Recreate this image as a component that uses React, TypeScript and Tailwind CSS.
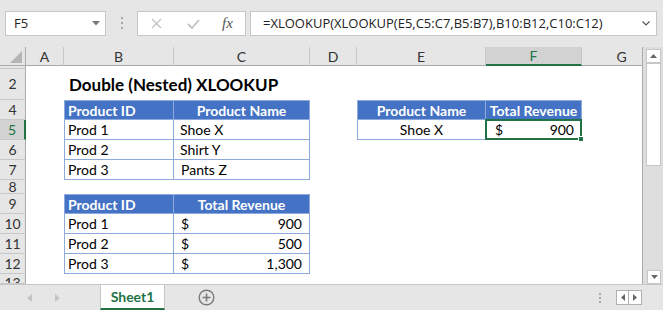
import React from "react";

const B = "border-[#8ea9db]";

function Row({
  n,
  h,
  sel,
  top,
  children,
}: {
  n: string;
  h: string;
  sel?: boolean;
  top?: boolean;
  children?: React.ReactNode;
}) {
  return (
    <div className={`flex shrink-0 ${h}`}>
      <div
        className={`w-[26px] shrink-0 flex justify-center overflow-hidden border-b border-b-[#c8c8c8] text-[14px] leading-none ${
          top ? "items-start pt-[2px]" : "items-center"
        } ${
          sel
            ? "bg-[#d2d2d2] text-[#217346] border-r-2 border-r-[#217346]"
            : "bg-[#e6e6e6] text-[#333] border-r border-r-[#ababab]"
        }`}
      >
        {n}
      </div>
      {children}
    </div>
  );
}

function ColHead({ label, w, sel }: { label: string; w: string; sel?: boolean }) {
  return (
    <div
      className={`${w} shrink-0 flex items-center justify-center border-r border-[#c8c8c8] text-[14px] ${
        sel ? "bg-[#d2d2d2] text-[#217346] border-b-2 border-b-[#217346]" : "text-[#333] border-b border-b-[#ababab]"
      }`}
    >
      {label}
    </div>
  );
}

function FormulaBar() {
  return (
    <div className="h-[47px] shrink-0 flex items-start pt-[11px] font-['Open_Sans',sans-serif] text-[13px] text-[#222]">
      <div className="ml-[5px] w-[101px] h-[25px] bg-white border border-[#c6c6c6] flex items-center pl-[8px] pr-[5px]">
        <span>F5</span>
        <svg className="ml-auto" width="8" height="5" viewBox="0 0 8 5">
          <path d="M0 0 L8 0 L4 4.5 Z" fill="#7a7a7a" />
        </svg>
      </div>
      <div className="ml-[15px] mt-[6px] flex flex-col gap-[3px]">
        <div className="w-[2px] h-[2px] bg-[#a8a8a8]" />
        <div className="w-[2px] h-[2px] bg-[#a8a8a8]" />
        <div className="w-[2px] h-[2px] bg-[#a8a8a8]" />
      </div>
      <div className="ml-[14px] w-[109px] h-[25px] bg-white border border-[#c6c6c6] flex items-center">
        <svg className="ml-[13px]" width="11" height="11" viewBox="0 0 11 11">
          <path d="M1 1 L10 10 M10 1 L1 10" stroke="#c2c2c2" strokeWidth="1.3" />
        </svg>
        <svg className="ml-[25px]" width="13" height="10" viewBox="0 0 13 10">
          <path d="M1 5 L5 9 L12 1" stroke="#c2c2c2" strokeWidth="1.8" fill="none" />
        </svg>
        <span className="ml-[22px] font-['Liberation_Serif',serif] italic text-[15px] text-[#555]">fx</span>
      </div>
      <div className="ml-[4px] w-[407px] h-[25px] bg-white border border-[#c6c6c6] flex items-center pl-[12px] pr-[6px]">
        <span>=XLOOKUP(XLOOKUP(E5,C5:C7,B5:B7),B10:B12,C10:C12)</span>
        <svg className="ml-auto" width="8" height="5" viewBox="0 0 8 5">
          <path d="M0.5 0.5 L4 4 L7.5 0.5" stroke="#555" strokeWidth="1.2" fill="none" />
        </svg>
      </div>
    </div>
  );
}

function Sheet() {
  return (
    <div className="w-[643px] shrink-0 flex flex-col border-r border-[#ababab] bg-white overflow-hidden">
      <div className="flex h-[19px] shrink-0 bg-[#e6e6e6]">
        <div className="w-[26px] shrink-0 flex items-end justify-end pr-[3px] pb-[2px] border-r border-b border-[#ababab]">
          <svg width="12" height="12" viewBox="0 0 12 12">
            <path d="M12 0 L12 12 L0 12 Z" fill="#b5b5b5" />
          </svg>
        </div>
        <ColHead label="A" w="w-[38px]" />
        <ColHead label="B" w="w-[110px]" />
        <ColHead label="C" w="w-[136px]" />
        <ColHead label="D" w="w-[47px]" />
        <ColHead label="E" w="w-[129px]" />
        <ColHead label="F" w="w-[96px]" sel />
        <ColHead label="G" w="w-[80px]" />
      </div>

      <Row n="" h="h-[3px]" />
      <Row n="2" h="h-[31px]">
        <div className="w-[38px] shrink-0" />
        <div className="flex items-center pl-[5px] text-[17px] font-bold whitespace-nowrap">
          Double (Nested) XLOOKUP
        </div>
      </Row>

      <Row n="4" h="h-[20px]">
        <div className="w-[38px] shrink-0" />
        <div className={`w-[110px] shrink-0 flex items-center pl-[3px] bg-[#4472c4] text-white font-bold border ${B}`}>
          Product ID
        </div>
        <div className={`w-[136px] shrink-0 flex items-center justify-center bg-[#4472c4] text-white font-bold border-t border-r border-b ${B}`}>
          Product Name
        </div>
        <div className="w-[47px] shrink-0" />
        <div className={`w-[129px] shrink-0 flex items-center justify-center bg-[#4472c4] text-white font-bold border ${B}`}>
          Product Name
        </div>
        <div className={`w-[96px] shrink-0 flex items-center justify-center bg-[#4472c4] text-white font-bold border-t border-r border-b ${B} whitespace-nowrap`}>
          Total Revenue
        </div>
      </Row>
      <Row n="5" h="h-[20px]" sel>
        <div className="w-[38px] shrink-0" />
        <div className={`w-[110px] shrink-0 flex items-center pl-[3px] border-l border-r border-b ${B}`}>Prod 1</div>
        <div className={`w-[136px] shrink-0 flex items-center pl-[6px] border-r border-b ${B}`}>Shoe X</div>
        <div className="w-[47px] shrink-0" />
        <div className={`w-[129px] shrink-0 flex items-center justify-center border-l border-r border-b ${B}`}>Shoe X</div>
        <div className={`relative w-[96px] shrink-0 flex items-center justify-between pl-[9px] pr-[7px] border-r border-b ${B}`}>
          <span>$</span>
          <span>900</span>
          <div className="absolute -left-[1px] -top-[1px] -right-[1px] -bottom-[1px] border-2 border-[#217346]" />
          <div className="absolute -right-[3px] -bottom-[3px] w-[6px] h-[6px] bg-[#217346] border border-white" />
        </div>
      </Row>
      <Row n="6" h="h-[20px]">
        <div className="w-[38px] shrink-0" />
        <div className={`w-[110px] shrink-0 flex items-center pl-[3px] border-l border-r border-b ${B}`}>Prod 2</div>
        <div className={`w-[136px] shrink-0 flex items-center pl-[6px] border-r border-b ${B}`}>Shirt Y</div>
      </Row>
      <Row n="7" h="h-[20px]">
        <div className="w-[38px] shrink-0" />
        <div className={`w-[110px] shrink-0 flex items-center pl-[3px] border-l border-r border-b ${B}`}>Prod 3</div>
        <div className={`w-[136px] shrink-0 flex items-center pl-[7px] border-r border-b ${B}`}>Pants Z</div>
      </Row>
      <Row n="8" h="h-[14px]" />

      <Row n="9" h="h-[20px]">
        <div className="w-[38px] shrink-0" />
        <div className={`w-[110px] shrink-0 flex items-center pl-[3px] bg-[#4472c4] text-white font-bold border ${B}`}>
          Product ID
        </div>
        <div className={`w-[136px] shrink-0 flex items-center justify-center bg-[#4472c4] text-white font-bold border-t border-r border-b ${B}`}>
          Total Revenue
        </div>
      </Row>
      {[
        ["10", "Prod 1", "900"],
        ["11", "Prod 2", "500"],
        ["12", "Prod 3", "1,300"],
      ].map(([n, id, rev]) => (
        <Row key={n} n={n} h="h-[20px]">
          <div className="w-[38px] shrink-0" />
          <div className={`w-[110px] shrink-0 flex items-center pl-[3px] border-l border-r border-b ${B}`}>{id}</div>
          <div className={`w-[136px] shrink-0 flex items-center justify-between pl-[7px] pr-[7px] border-r border-b ${B}`}>
            <span>$</span>
            <span>{rev}</span>
          </div>
        </Row>
      ))}
      <Row n="13" h="h-[10px]" top />
    </div>
  );
}

function VScroll() {
  return (
    <div className="flex-1 flex flex-col items-start pl-[3px] pt-[2px] bg-[#dedede]">
      <div className="w-[15px] h-[14px] bg-white border border-[#c6c6c6] flex items-center justify-center">
        <svg width="7" height="4" viewBox="0 0 7 4">
          <path d="M0 4 L7 4 L3.5 0 Z" fill="#666" />
        </svg>
      </div>
      <div className="w-[15px] h-[103px] bg-white border border-[#c6c6c6]" />
      <div className="flex-1" />
      <div className="ml-[1px] w-[14px] h-[14px] bg-white border border-[#c6c6c6] flex items-center justify-center">
        <svg width="7" height="4" viewBox="0 0 7 4">
          <path d="M0 0 L7 0 L3.5 4 Z" fill="#666" />
        </svg>
      </div>
    </div>
  );
}

function TabBar() {
  return (
    <div className="h-[26px] shrink-0 flex items-stretch border-t border-[#c6c6c6] bg-[#e6e6e6]">
      <div className="flex items-center pl-[27px]">
        <svg width="5" height="8" viewBox="0 0 5 8">
          <path d="M5 0 L5 8 L0 4 Z" fill="#c4c4c4" />
        </svg>
        <svg className="ml-[23px]" width="5" height="8" viewBox="0 0 5 8">
          <path d="M0 0 L0 8 L5 4 Z" fill="#c4c4c4" />
        </svg>
      </div>
      <div className="ml-[40px] w-[65px] h-[25px] bg-white border-l border-r border-[#c6c6c6] border-b-2 border-b-[#217346] flex items-center justify-center font-bold text-[14px] text-[#217346]">
        Sheet1
      </div>
      <div className="ml-[33px] flex items-center">
        <svg width="17" height="17" viewBox="0 0 17 17">
          <circle cx="8.5" cy="8.5" r="7.3" stroke="#7a7a7a" strokeWidth="1.4" fill="none" />
          <path d="M8.5 4.5 L8.5 12.5 M4.5 8.5 L12.5 8.5" stroke="#7a7a7a" strokeWidth="1.6" />
        </svg>
      </div>
      <div className="ml-auto mr-[21px] flex items-center">
        <div className="flex flex-col gap-[2px]">
          <div className="w-[2px] h-[2px] bg-[#a8a8a8]" />
          <div className="w-[2px] h-[2px] bg-[#a8a8a8]" />
          <div className="w-[2px] h-[2px] bg-[#a8a8a8]" />
        </div>
        <div className="ml-[15px] flex">
          <div className="w-[13px] h-[15px] border border-[#b0b0b0] bg-white flex items-center justify-center">
            <svg width="4" height="7" viewBox="0 0 4 7">
              <path d="M4 0 L4 7 L0 3.5 Z" fill="#666" />
            </svg>
          </div>
          <div className="w-[13px] h-[15px] border border-l-0 border-[#b0b0b0] bg-white flex items-center justify-center">
            <svg width="4" height="7" viewBox="0 0 4 7">
              <path d="M0 0 L0 7 L4 3.5 Z" fill="#666" />
            </svg>
          </div>
        </div>
      </div>
    </div>
  );
}

export default function App() {
  return (
    <div className="w-[663px] h-[310px] overflow-hidden bg-[#e6e6e6] flex flex-col font-['Lato',sans-serif] text-[14px] text-black">
      <FormulaBar />
      <div className="flex h-[237px] shrink-0">
        <Sheet />
        <VScroll />
      </div>
      <TabBar />
    </div>
  );
}
